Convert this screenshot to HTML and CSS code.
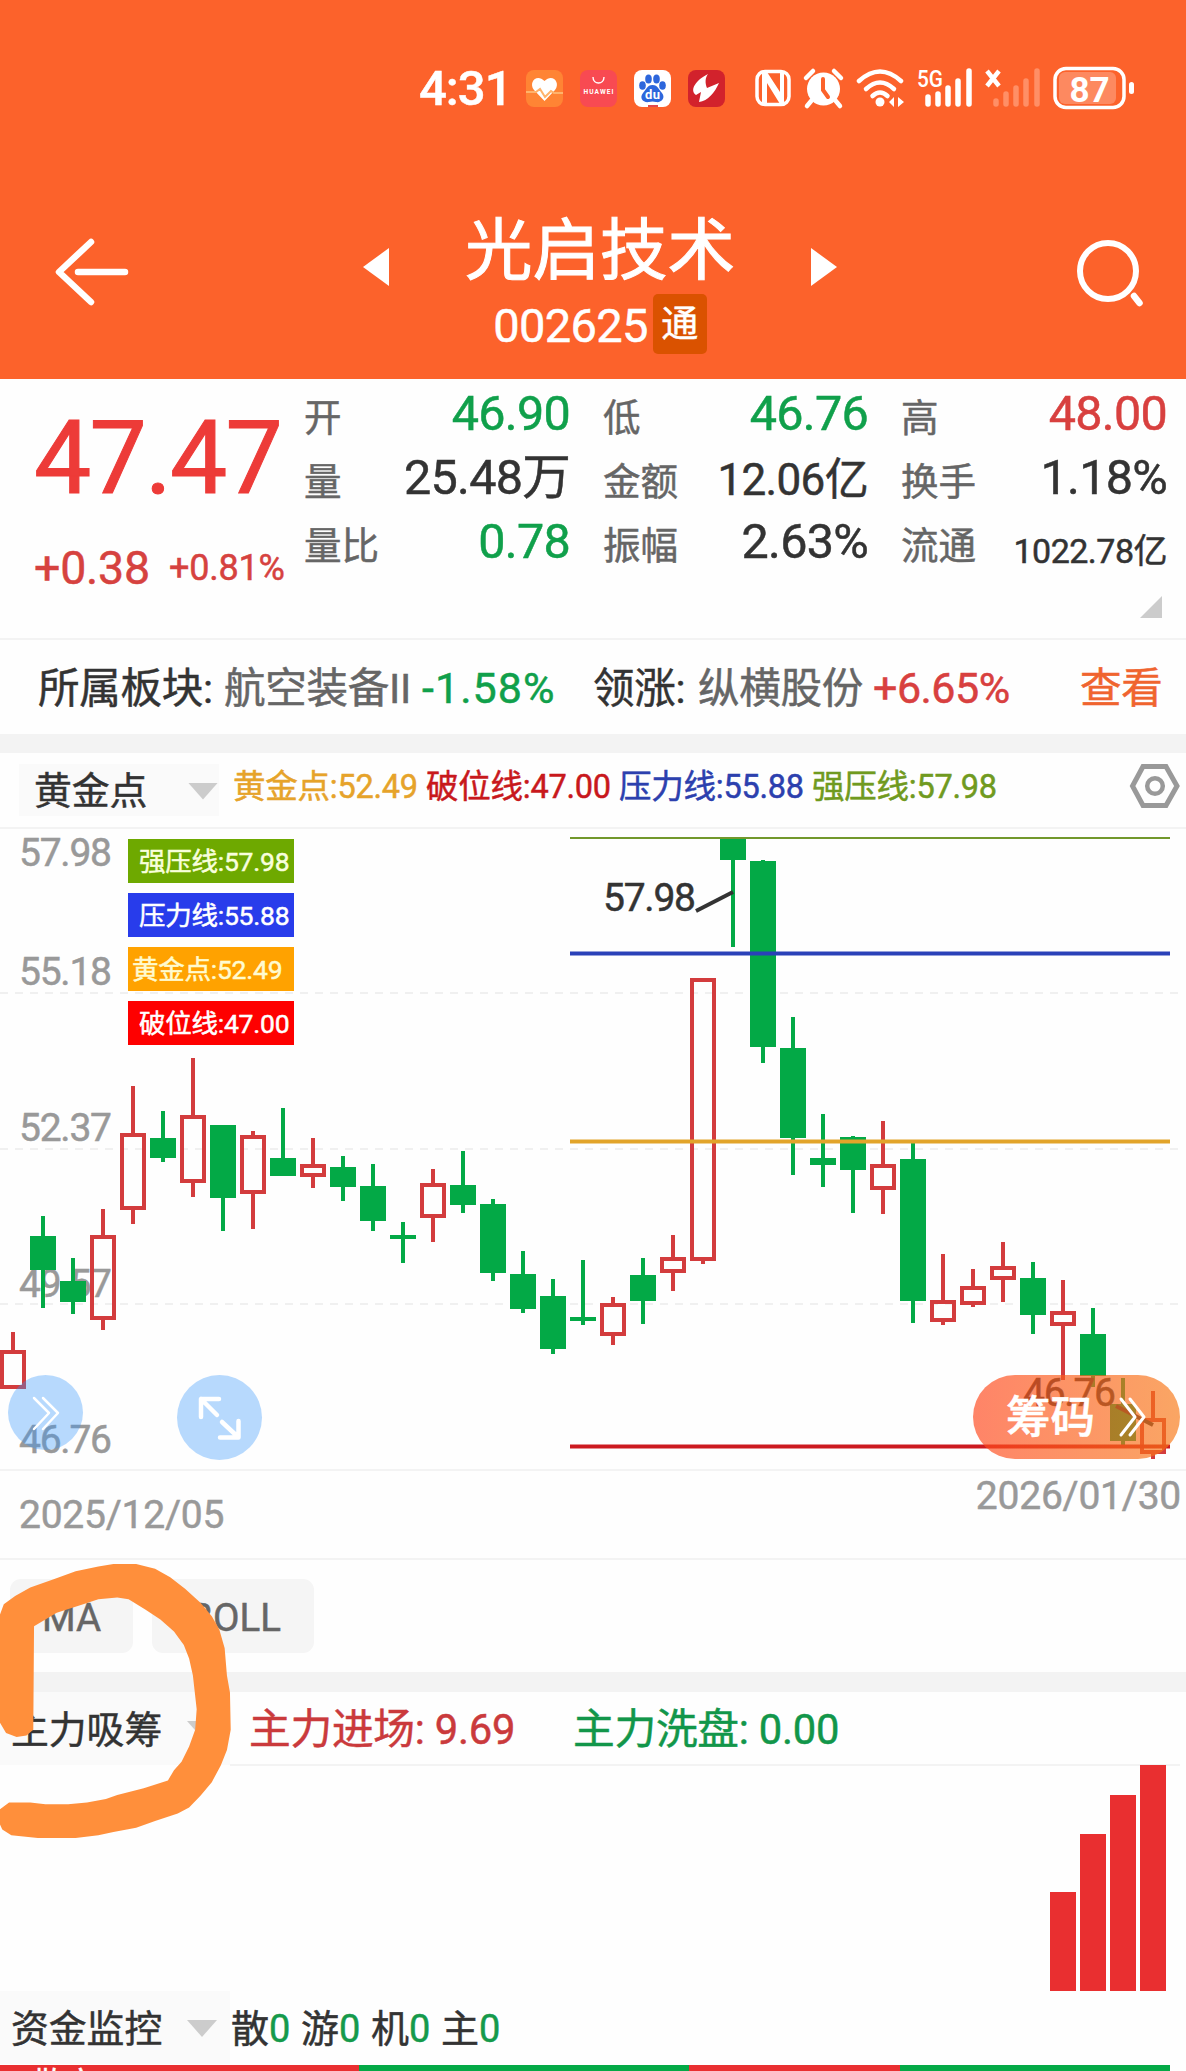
FILE: index.html
```html
<!DOCTYPE html>
<html lang="zh-CN">
<head>
<meta charset="UTF-8" />
<meta name="viewport" content="width=device-width, initial-scale=1" />
<title>光启技术 002625</title>
<link rel="stylesheet" href="styles.css">
</head>
<body>

<header class="header">
  <div class="status-bar">
    <span class="clock">4:31</span>
    <div class="apps">
      <svg class="app" viewBox="0 0 37 37">
        <rect width="37" height="37" rx="8" fill="#ff8434"/>
        <path d="M18.5 31 L8 20 C2 12 11 3 18.5 11 C26 3 35 12 29 20 Z" fill="#fff"/>
        <path d="M0 22 H10 L14 19 L19 27 L25 21 L28 23 H37" fill="none" stroke="#ffb36b" stroke-width="2"/>
      </svg>
      <svg class="app" viewBox="0 0 37 37">
        <rect width="37" height="37" rx="8" fill="#f84a52"/>
        <path d="M13 7 C13 15 24 15 24 7" fill="none" stroke="#fff" stroke-width="1.4"/>
        <text x="3.5" y="23.5" font-size="6.6" font-weight="700" fill="#fff" textLength="30">HUAWEI</text>
      </svg>
      <svg class="app" viewBox="0 0 37 37">
        <rect width="37" height="37" rx="8" fill="#fff"/>
        <g fill="#2c66dc">
          <ellipse cx="8.500" cy="15.500" rx="3.300" ry="4.300"/>
          <ellipse cx="14.500" cy="9" rx="3.300" ry="4.500"/>
          <ellipse cx="22.500" cy="9" rx="3.300" ry="4.500"/>
          <ellipse cx="28.500" cy="15.500" rx="3.300" ry="4.300"/>
          <path d="M18.500 15 C24 15 25 20 28 23 C32 28 27 33 22 32 Q18.500 31 15 32 C9 33 5 28 9 23 C12 20 13 15 18.500 15 Z"/>
        </g>
        <path d="M14 35 h10 v2 h-10 z" fill="#e2484c"/>
        <text x="11" y="28.500" font-size="13" font-weight="700" fill="#fff" textLength="15">du</text>
      </svg>
      <svg class="app" viewBox="0 0 37 37">
        <rect width="37" height="37" rx="8" fill="#d2222c"/>
        <path d="M20 4 C8 10 1 20 8 25 L13 22 L11 32 C20 31 27 22 31 13 L19 18 C17 13 17 8 20 4 Z" fill="#fff"/>
      </svg>
    </div>
    <svg class="system" viewBox="752 62 386 52">
      <!-- nfc -->
      <rect x="757" y="71.500" width="32" height="33" rx="8" fill="none" stroke="#fff" stroke-width="3.500"/>
      <path d="M762 72 H767 L780 92 V72 H784 V104 H780 L767 83 V104 H762 Z" fill="#fff"/>
      <!-- alarm -->
      <circle cx="823.500" cy="89" r="16.500" fill="#fff"/>
      <path d="M806 78 L813 71 M841 78 L834 71 M812 100 L807 106 M835 100 L840 106" stroke="#fff" stroke-width="4.500" stroke-linecap="round"/>
      <path d="M823 79 V90 L828 97" stroke="#fc622b" stroke-width="4" fill="none" stroke-linecap="round"/>
      <!-- wifi -->
      <g fill="none" stroke="#fff" stroke-width="4.500" stroke-linecap="round">
        <path d="M859 81 Q880 62 901 81"/>
        <path d="M866 89 Q880 76 894 89"/>
        <path d="M872.500 96 Q880 89 887.500 96"/>
      </g>
      <circle cx="880" cy="102" r="4.500" fill="#fff"/>
      <path d="M889 102 l5 -5 v10 z M904 102 l-6 -5 v10 z" fill="#fff"/>
      <!-- signal -->
      <text x="917" y="87" font-size="24" font-weight="500" fill="#fff" textLength="26" lengthAdjust="spacingAndGlyphs">5G</text>
      <path d="M928 97 V104 M938 94 V104 M948 88 V104 M958 81 V104 M969 71 V104" stroke="#fff" stroke-width="5.500" stroke-linecap="round"/>
      <path d="M987 71 L999 86 M999 71 L987 86" stroke="#fff" stroke-width="4.500"/>
      <path d="M996 101 V104 M1006 94 V104 M1016 88 V104 M1026 81 V104 M1037 71 V104" stroke="#ff8f66" stroke-width="5.500" stroke-linecap="round"/>
      <!-- battery -->
      <rect x="1059" y="72" width="57" height="32" rx="6" fill="#fd8960"/>
      <rect x="1055" y="68.500" width="69" height="39" rx="11" fill="none" stroke="#fff" stroke-width="3.500"/>
      <rect x="1129" y="82" width="5" height="12" rx="2.500" fill="#fff"/>
      <text x="1069.500" y="101.500" font-size="35" font-weight="700" fill="#fff" textLength="40">87</text>
    </svg>
  </div>

  <div class="nav">
    <svg class="back" viewBox="0 0 80 72">
      <path d="M41 6 L9 36 L41 66 M28 36 H75" fill="none" stroke="#fff" stroke-width="6.500" stroke-linecap="round" stroke-linejoin="round"/>
    </svg>
    <span class="prev"></span>
    <div class="stock">
      <div class="stock-name">光启技术</div>
      <div class="stock-code">002625<span class="tong">通</span></div>
    </div>
    <span class="next"></span>
    <svg class="search" viewBox="0 0 70 70">
      <circle cx="32" cy="33" r="28" fill="none" stroke="#fff" stroke-width="6"/>
      <path d="M58 58 L63.500 65" stroke="#fff" stroke-width="6.500" stroke-linecap="round"/>
    </svg>
  </div>
</header>

<section class="quote">
  <div class="price-box">
    <div class="price">47.47</div>
    <div class="change"><span class="diff">+0.38</span><span class="rate">+0.81%</span></div>
  </div>
  <div class="stats">
    <div class="stat"><span class="label">开</span><span class="value down">46.90</span></div>
    <div class="stat"><span class="label">低</span><span class="value down">46.76</span></div>
    <div class="stat"><span class="label">高</span><span class="value up">48.00</span></div>
    <div class="stat"><span class="label">量</span><span class="value">25.48万</span></div>
    <div class="stat"><span class="label">金额</span><span class="value mid">12.06亿</span></div>
    <div class="stat"><span class="label">换手</span><span class="value">1.18%</span></div>
    <div class="stat"><span class="label">量比</span><span class="value down">0.78</span></div>
    <div class="stat"><span class="label">振幅</span><span class="value">2.63%</span></div>
    <div class="stat"><span class="label">流通</span><span class="value small">1022.78亿</span></div>
    <span class="expand"></span>
  </div>
</section>

<section class="sector">
  <span>所属板块:</span>
  <span class="grey">航空装备II</span>
  <span class="down drop">-1.58%</span>
  <span>领涨:</span>
  <span class="grey">纵横股份</span>
  <span class="up rise">+6.65%</span>
  <span class="look">查看</span>
</section>

<section class="indicator">
  <div class="picker">黄金点<i class="arrow"></i></div>
  <div class="legend">
    <span class="c-gold">黄金点:52.49</span>
    <span class="c-break">破位线:47.00</span>
    <span class="c-press">压力线:55.88</span>
    <span class="c-strong">强压线:57.98</span>
  </div>
  <svg class="setting" viewBox="0 0 52 48">
    <path d="M14 4.500 H37 L48 24 L37 43.500 H14 L3.500 24 Z" fill="none" stroke="#999" stroke-width="5"/>
    <circle cx="26" cy="24" r="7.800" fill="none" stroke="#999" stroke-width="4.500"/>
  </svg>
</section>

<section class="chart">
  <svg class="kline" viewBox="0 829 1186 640">
    <g class="grid">
      <path d="M0 993 H1178 M0 1149 H1178 M0 1304 H1178"/>
    </g>
    <g class="axis">
      <text x="19" y="866" textLength="93">57.98</text>
      <text x="19" y="985" textLength="93">55.18</text>
      <text x="19" y="1141" textLength="93">52.37</text>
      <text x="19" y="1297" textLength="93">49.57</text>
      <text x="19" y="1453" textLength="93">46.76</text>
    </g>
    <g id="candles"></g>
    <g class="levels">
      <path d="M570 838 H1170" stroke="#72982c" stroke-width="2"/>
      <path d="M570 953.500 H1170" stroke="#2a41b8" stroke-width="4"/>
      <path d="M570 1141.500 H1170" stroke="#e2a42a" stroke-width="4"/>
      <path d="M570 1446.500 H1170" stroke="#cc1a20" stroke-width="4"/>
    </g>
    <g class="marks">
      <text x="603" y="911" textLength="93">57.98</text>
      <path d="M696 911 L733 892"/>
      <text x="1023" y="1406" textLength="93">46.76</text>
      <path d="M1116 1406 L1153 1425"/>
    </g>
  </svg>
  <div class="tags">
    <span class="tag t-strong">强压线:57.98</span>
    <span class="tag t-press">压力线:55.88</span>
    <span class="tag t-gold">黄金点:52.49</span>
    <span class="tag t-break">破位线:47.00</span>
  </div>
  <div class="round slide">
    <svg viewBox="0 0 75 75"><path d="M26 23 L41 38 L26 54 M35 23 L50 38 L35 54" stroke-width="2.500"/></svg>
  </div>
  <div class="round full">
    <svg viewBox="0 0 85 85"><path d="M42 24 H24 V42 M24 24 L40 40 M45 47 L61 62 M43 62.500 H61.500 V46" stroke-width="4.500"/></svg>
  </div>
  <div class="chip"><span>筹码</span>
    <svg viewBox="0 0 30 42"><path d="M3 3 L17 21 L3 39 M12 3 L26 21 L12 39"/></svg>
  </div>
</section>

<section class="dates">
  <span>2025/12/05</span>
  <span class="end">2026/01/30</span>
</section>

<section class="lower">
  <div class="tabs">
    <span class="tab ma">MA</span>
    <span class="tab boll">BOLL</span>
  </div>
  <div class="main-force">
    <div class="picker flat">主力吸筹<i class="arrow"></i></div>
    <div class="force-values">
      <span class="enter">主力进场: 9.69</span>
      <span class="wash">主力洗盘: 0.00</span>
    </div>
  </div>
  <div class="bars" id="bars"></div>

  <!-- hand-drawn circle -->
  <svg class="scribble" viewBox="0 0 310 890" preserveAspectRatio="none">
    <path d="M0 220 L5 190 L20 165 L40 140 L70 117 L100 92 L130 78 L150 71 L180 71 L205 85 L225 110 L245 145 L265 185 L280 225 L290 265 L297 320 L300 400 L304 450 L305 560 L300 620 L292 665 L280 715 L265 755 L250 790 L235 808 L205 830 L180 850 L150 862 L130 872 L100 880 L50 880 L15 872 L3 855 L0 840 V795 L12 775 L40 775 L60 780 L90 780 L115 775 L140 765 L155 753 L190 733 L222 710 L230 680 L240 655 L250 610 L258 560 L260 500 L257 440 L255 400 L250 350 L243 310 L230 270 L212 235 L192 205 L170 175 L155 170 L130 175 L110 190 L75 215 L45 255 L44 560 L35 577 L22 582 L8 570 L0 540 Z" fill="#ff8f3b"/>
  </svg>
</section>

<section class="fund">
  <div class="picker flat">资金监控<i class="arrow"></i></div>
  <div class="fund-values">
    <span>散<b>0</b></span>
    <span>游<b>0</b></span>
    <span>机<b>0</b></span>
    <span>主<b>0</b></span>
  </div>
</section>
<div class="strip">
  <span class="s-red w1">散户</span><span class="s-green w2"></span><span class="s-red w3"></span><span class="s-green w4"></span>
</div>

<script>
  // [方向, 最高, 实体上沿, 实体下沿, 最低]
  const data = [
    ['r', 1332, 1350, 1389, 1389], ['g', 1216, 1236, 1270, 1308], ['g', 1258, 1281, 1302, 1314],
    ['r', 1209, 1235, 1320, 1330], ['r', 1086, 1133, 1210, 1224], ['g', 1111, 1138, 1158, 1162],
    ['r', 1058, 1115, 1183, 1197], ['g', 1125, 1125, 1198, 1231], ['r', 1131, 1135, 1194, 1229],
    ['g', 1108, 1158, 1176, 1176], ['r', 1138, 1164, 1177, 1188], ['g', 1156, 1167, 1187, 1201],
    ['g', 1164, 1186, 1221, 1231], ['g', 1222, 1235, 1239, 1263], ['r', 1169, 1183, 1218, 1242],
    ['g', 1151, 1185, 1205, 1213], ['g', 1199, 1204, 1273, 1281], ['g', 1251, 1274, 1309, 1313],
    ['g', 1279, 1296, 1349, 1354], ['g', 1260, 1317, 1321, 1325], ['r', 1297, 1303, 1336, 1345],
    ['g', 1258, 1275, 1301, 1324], ['r', 1235, 1257, 1273, 1291], ['r', 978, 978, 1261, 1264],
    ['g', 838, 838, 860, 947], ['g', 860, 861, 1047, 1063], ['g', 1017, 1048, 1138, 1175],
    ['g', 1114, 1158, 1165, 1187], ['g', 1136, 1137, 1170, 1213], ['r', 1121, 1164, 1190, 1214],
    ['g', 1143, 1159, 1301, 1323], ['r', 1254, 1300, 1322, 1325], ['r', 1269, 1286, 1305, 1307],
    ['r', 1242, 1266, 1280, 1302], ['g', 1262, 1278, 1315, 1334], ['r', 1280, 1311, 1326, 1380],
    ['g', 1308, 1334, 1376, 1387], ['g', 1378, 1404, 1441, 1445], ['r', 1391, 1418, 1454, 1459]
  ];

  let html = '';
  data.forEach(([type, high, top, bottom, low], i) => {
    const x = 13 + i * 30;
    if (type === 'g') {
      html += `<path class="g" d="M${x - 2} ${high} h4 V${low} h-4 Z M${x - 13} ${top} h26 V${bottom} h-26 Z"/>`;
    } else {
      html += `<path class="r" d="M${x} ${high} V${top} M${x} ${bottom} V${low} M${x - 11} ${top + 2} h22 V${bottom - 2} h-22 Z"/>`;
    }
  });
  document.getElementById('candles').innerHTML = html;

  const bars = [99, 157, 196, 226];
  document.getElementById('bars').innerHTML = bars
    .map(h => `<span class="bar" style="height:${h}px"></span>`).join('');
</script>

</body>
</html>
```
FILE: styles.css
```css
* {
  box-sizing: border-box;
}
body {
  margin: 0;
  width: 1186px;
  height: 2071px;
  overflow: hidden;
  background: #fefefe;
  color: #333;
  font-family: Roboto, "Noto Sans CJK SC", sans-serif;
  letter-spacing: -0.015em;
  -webkit-text-stroke: 0.5px;
}
svg {
  display: block;
  flex: none;
}
svg text {
  letter-spacing: 0;
  -webkit-text-stroke: 0;
}
section {
  position: relative;
}
.up { color: #d8403f; }
.down { color: #10a04b; }
.grey { color: #666; }

/* header */
.header {
  height: 379px;
  background: #fc622b;
  color: #fff;
}
.status-bar {
  display: flex;
  align-items: center;
  height: 178px;
  padding-left: 419px;
}
.clock {
  width: 106.500px;
  font-size: 49px;
  font-weight: 500;
  line-height: 52px;
  letter-spacing: -0.020em;
}
.apps {
  display: flex;
  gap: 17px;
  margin: -1px 27px 0 0;
}
.app {
  width: 37px;
  height: 37px;
}
.system {
  width: 386px;
  height: 52px;
  margin-top: -2px;
}
.nav {
  display: flex;
  height: 201px;
  padding-left: 51px;
}
.back {
  width: 80px;
  height: 72px;
  margin: 58px 0 0 -1px;
}
.prev, .next {
  width: 26px;
  height: 38px;
  margin-top: 70px;
  background: #fff;
}
.prev {
  margin-left: 233px;
  clip-path: polygon(100% 0, 100% 100%, 0 50%);
}
.next {
  clip-path: polygon(0 0, 100% 50%, 0 100%);
}
.stock {
  width: 422px;
  text-align: center;
}
.stock-name {
  margin-top: 31px;
  font-size: 67.500px;
  line-height: 84px;
  letter-spacing: 0;
  -webkit-text-stroke: 1px;
}
.stock-code {
  display: flex;
  justify-content: center;
  align-items: center;
  gap: 5px;
  height: 60px;
  margin-top: 1px;
  padding-top: 3px;
  font-size: 47px;
  letter-spacing: -0.015em;
}
.tong {
  width: 54px;
  height: 60px;
  margin-top: -3px;
  border-radius: 5px;
  background: #da5200;
  font-size: 37px;
  line-height: 61px;
  letter-spacing: 0;
}
.search {
  width: 70px;
  height: 70px;
  margin: 60px 0 0 239px;
}

/* quote */
.quote {
  display: flex;
  height: 261px;
  border-bottom: 2px solid #f3f3f3;
}
.price-box {
  width: 304px;
  padding: 29px 0 0 34px;
}
.price {
  color: #ed3b38;
  font-size: 102px;
  line-height: 100px;
  letter-spacing: -0.018em;
  -webkit-text-stroke: 1px;
}
.change {
  display: flex;
  align-items: center;
  margin-top: 32px;
  color: #d6423f;
  line-height: 56px;
}
.diff {
  width: 135px;
  font-size: 46.500px;
}
.rate {
  font-size: 36px;
}
.stats {
  position: relative;
  display: grid;
  grid-template-columns: 266px 265px 266px;
  grid-auto-rows: 64px;
  column-gap: 33px;
  padding-top: 3px;
}
.stat {
  display: flex;
  justify-content: space-between;
  line-height: 64px;
}
.label {
  padding-top: 4px;
  color: #666;
  font-size: 37.500px;
  letter-spacing: 0;
}
.value {
  font-size: 48.500px;
  letter-spacing: -0.015em;
}
.mid {
  padding-top: 2px;
  font-size: 44px;
}
.small {
  padding-top: 9px;
  font-size: 34px;
}
.expand {
  position: absolute;
  right: 5px;
  bottom: 20px;
  width: 22px;
  height: 22px;
  background: #ccc;
  clip-path: polygon(100% 0, 100% 100%, 0 100%);
}

/* sector */
.sector {
  display: grid;
  grid-template-columns: 186px 198px 171px 105px 175px 207px 90px;
  height: 113px;
  padding-left: 38px;
  border-bottom: 19px solid #f3f3f3;
  font-size: 41.500px;
  line-height: 97px;
}
.drop {
  font-size: 43px;
  letter-spacing: 0.025em;
}
.rise {
  font-size: 43px;
  letter-spacing: -0.012em;
}
.look {
  color: #f0642f;
}

/* indicator row */
.indicator {
  display: flex;
  height: 76px;
  border-bottom: 2px solid #f3f3f3;
}
.picker {
  display: flex;
  align-items: center;
  justify-content: space-between;
  width: 200px;
  height: 52px;
  margin: 11px 0 0 19px;
  padding: 0 1px 5px 15px;
  background: #fafafa;
  font-size: 37.800px;
  letter-spacing: 0;
}
.picker.flat {
  width: 230px;
  height: 73px;
  margin: 0;
  padding: 0 13px 5px 11px;
}
.arrow {
  width: 30px;
  height: 17px;
  margin-top: 7px;
  background: #ccc;
  clip-path: polygon(0 0, 100% 0, 50% 100%);
}
.legend {
  display: flex;
  margin-left: 14px;
  font-size: 32.500px;
  line-height: 69px;
}
.legend span {
  width: 193px;
}
.c-gold { color: #e6a32a; }
.c-break { color: #c8181c; }
.c-press { color: #2c40ae; }
.c-strong { color: #709a20; }
.setting {
  width: 52px;
  height: 48px;
  margin: 9px 0 0 124px;
}

/* chart */
.chart {
  height: 642px;
  border-bottom: 2px solid #f3f3f3;
}
.kline {
  width: 1186px;
  height: 640px;
}
.grid path {
  stroke: #f0f0f0;
  stroke-width: 2;
  stroke-dasharray: 8 7;
}
.axis text {
  fill: #999;
  stroke: #999;
  stroke-width: 0.500;
  font-size: 39px;
}
.g {
  fill: #03a946;
}
.r {
  fill: none;
  stroke: #d33c3d;
  stroke-width: 4;
}
.marks text {
  fill: #333;
  stroke: #333;
  stroke-width: 0.500;
  font-size: 39px;
}
.marks path {
  stroke: #333;
  stroke-width: 4;
}
.tags {
  position: absolute;
  top: 10px;
  left: 128px;
  display: flex;
  flex-direction: column;
  gap: 10px;
}
.tag {
  width: 166px;
  height: 44px;
  padding-left: 11px;
  color: #fff;
  font-size: 26.500px;
  line-height: 45px;
}
.t-strong { background: #6ea900; color: #f8ffdc; }
.t-press { background: #283ceb; }
.t-gold { background: #ffa200; color: #fffbcf; padding-left: 4px; }
.t-break { background: #fe0000; }
.round {
  position: absolute;
  border-radius: 50%;
  background: rgba(52, 148, 252, 0.35);
}
.round path, .chip path {
  fill: none;
  stroke: #fff;
  stroke-linecap: round;
  stroke-linejoin: round;
}
.slide {
  top: 546px;
  left: 8px;
  width: 75px;
  height: 75px;
}
.full {
  top: 546px;
  left: 177px;
  width: 85px;
  height: 85px;
}
.chip {
  position: absolute;
  top: 546px;
  left: 973px;
  display: flex;
  align-items: center;
  gap: 23px;
  width: 207px;
  height: 84px;
  padding-left: 33px;
  border-radius: 42px;
  background: linear-gradient(90deg, rgba(255, 72, 30, 0.67), rgba(248, 122, 24, 0.67));
  color: #fff;
  font-size: 44.500px;
  line-height: 87px;
  letter-spacing: 0;
}
.chip span {
  height: 84px;
  font-weight: 500;
}
.chip svg {
  width: 30px;
  height: 42px;
}
.chip path {
  stroke-width: 3;
}

/* dates */
.dates {
  display: flex;
  justify-content: space-between;
  height: 89px;
  padding: 0 5px 0 19px;
  border-bottom: 2px solid #f3f3f3;
  color: #999;
  font-size: 39px;
  line-height: 88px;
}
.dates .end {
  line-height: 50px;
}

/* lower indicators */
.lower {
  height: 431px;
}
.tabs {
  display: flex;
  gap: 19px;
  height: 132px;
  padding: 19px 0 0 10px;
  border-bottom: 20px solid #f3f3f3;
}
.tab {
  height: 74px;
  border-radius: 11px;
  background: #f5f5f5;
  color: #666;
  font-size: 38.500px;
  line-height: 77px;
  text-align: center;
  letter-spacing: 0;
}
.ma { width: 123px; }
.boll { width: 162px; padding-left: 4px; }
.main-force {
  display: flex;
  height: 74px;
}
.force-values {
  display: flex;
  width: 950px;
  padding-left: 19px;
  border-bottom: 2px solid #f3f3f3;
  font-size: 41.700px;
  line-height: 75px;
}
.enter {
  width: 324px;
  color: #ca3a3c;
}
.wash {
  color: #12964a;
}
.bars {
  display: flex;
  justify-content: flex-end;
  align-items: flex-end;
  gap: 4px;
  height: 226px;
  margin-top: -1px;
  padding-right: 20px;
}
.bar {
  width: 26px;
  background: #e92f30;
}
.scribble {
  position: absolute;
  top: -20px;
  left: 0;
  width: 234.500px;
  height: 301.400px;
}

/* fund */
.fund {
  display: flex;
  height: 74px;
}
.fund-values {
  display: flex;
  padding-left: 1px;
  font-size: 38px;
  line-height: 77px;
  letter-spacing: 0;
}
.fund-values span {
  width: 70px;
}
.fund-values b {
  color: #159a4b;
  font-weight: 400;
}
.strip {
  display: flex;
  height: 6px;
  overflow: hidden;
}
.strip span {
  height: 40px;
}
.s-red { background: #e92f30; }
.s-green { background: #03a946; }
.w1 {
  width: 359px;
  padding-left: 33px;
  color: #fff;
  font-size: 32px;
  line-height: 38px;
}
.w2 { width: 330px; }
.w3 { width: 211px; }
.w4 { width: 270px; }
```
